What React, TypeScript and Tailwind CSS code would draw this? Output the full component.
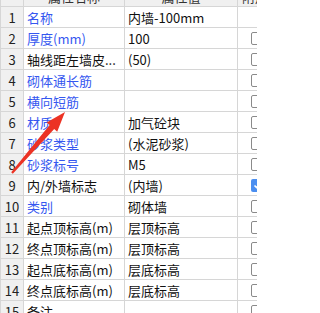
import React from "react";

type Row = {
  name: string;
  value: string;
  blue?: boolean;
  check?: "none" | "off" | "on";
};

const rows: Row[] = [
  { name: "名称", value: "内墙-100mm", blue: true, check: "none" },
  { name: "厚度(mm)", value: "100", blue: true },
  { name: "轴线距左墙皮...", value: "(50)" },
  { name: "砌体通长筋", value: "", blue: true },
  { name: "横向短筋", value: "", blue: true },
  { name: "材质", value: "加气砼块", blue: true },
  { name: "砂浆类型", value: "(水泥砂浆)", blue: true },
  { name: "砂浆标号", value: "M5", blue: true },
  { name: "内/外墙标志", value: "(内墙)", check: "on" },
  { name: "类别", value: "砌体墙", blue: true },
  { name: "起点顶标高(m)", value: "层顶标高" },
  { name: "终点顶标高(m)", value: "层顶标高" },
  { name: "起点底标高(m)", value: "层底标高" },
  { name: "终点底标高(m)", value: "层底标高" },
  { name: "备注", value: "" },
];

const Checkbox = ({ on }: { on: boolean }) =>
  on ? (
    <div className="w-[13px] h-[13px] rounded-[2px] bg-[#4a8ef0] flex items-center justify-center">
      <svg width="9" height="9" viewBox="0 0 9 9">
        <path d="M1.5 4.5 L3.6 6.6 L7.6 2.2" stroke="white" strokeWidth="1.6" fill="none" />
      </svg>
    </div>
  ) : (
    <div className="w-[13px] h-[13px] rounded-[2px] border border-[#8a8a8a] bg-white" />
  );

export default function App() {
  return (
    <div
      className="relative w-[257px] h-[313px] overflow-hidden bg-white text-[13px] leading-none"
      style={{ fontFamily: '"Noto Sans CJK SC", "Noto Sans", sans-serif' }}
    >
      <div className="-mt-[14px] border-l border-[#d6d6d6] w-[300px]">
        {/* header */}
        <div className="grid grid-cols-[23px_101px_113px_60px] h-[21px] bg-[#f0f0f0] text-[#333]">
          <div className="border-r border-b border-[#d6d6d6]" />
          <div className="border-r border-b border-[#d6d6d6] flex items-center justify-center">属性名称</div>
          <div className="border-r border-b border-[#d6d6d6] flex items-center justify-center">属性值</div>
          <div className="border-b border-[#d6d6d6] flex items-center pl-[4px]">附加</div>
        </div>
        {rows.map((r, i) => (
          <div key={i} className="grid grid-cols-[23px_101px_113px_60px] h-[21px]">
            <div className="border-r border-b border-[#d6d6d6] bg-[#f0f0f0] flex items-center justify-center text-[#222]">
              {i + 1}
            </div>
            <div
              className={`border-r border-b border-[#d6d6d6] flex items-center pl-[3px] whitespace-nowrap overflow-hidden ${
                r.blue ? "text-[#3557f0]" : "text-[#111]"
              }`}
            >
              {r.name}
            </div>
            <div className="border-r border-b border-[#d6d6d6] flex items-center pl-[3px] text-[#111] whitespace-nowrap">
              {r.value}
            </div>
            <div className="border-b border-[#d6d6d6] flex items-center pl-[13px]">
              {r.check !== "none" && <Checkbox on={r.check === "on"} />}
            </div>
          </div>
        ))}
      </div>

      {/* red annotation arrow */}
      <svg className="absolute left-0 top-0 pointer-events-none" width="257" height="313" viewBox="0 0 257 313">
        <polygon
          points="11.2,172.3 49.6,125.1 46.6,122.5 65,112 57.2,131.7 54.2,129.1 12.8,173.7"
          fill="#ec3324"
        />
      </svg>
    </div>
  );
}
